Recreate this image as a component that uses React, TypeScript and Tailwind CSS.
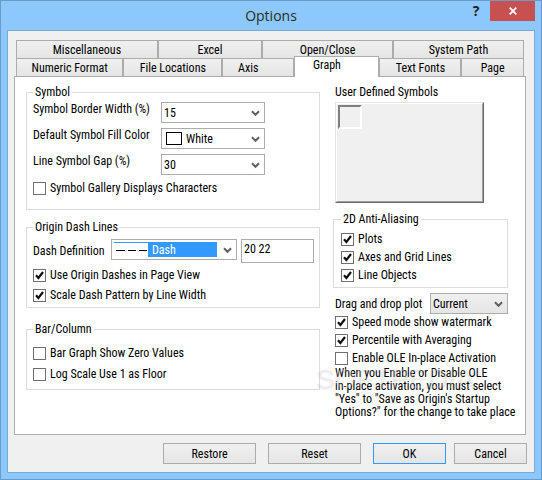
import React from "react";

const topTabs = [
  { label: "Miscellaneous", grow: "flex-[142_1_0%]" },
  { label: "Excel", grow: "flex-[104_1_0%]" },
  { label: "Open/Close", grow: "flex-[131_1_0%]" },
  { label: "System Path", grow: "flex-[131_1_0%]" },
];

const bottomTabs = [
  { label: "Numeric Format", grow: "flex-[108_1_0%]" },
  { label: "File Locations", grow: "flex-[99_1_0%]" },
  { label: "Axis", grow: "flex-[72_1_0%]", inner: "block pr-5" },
  {
    label: "Graph",
    grow: "flex-[85_1_0%]",
    inner: "block pr-5 pb-1",
    active: true,
  },
  { label: "Text Fonts", grow: "flex-[82_1_0%]" },
  { label: "Page", grow: "flex-[62_1_0%]" },
];

interface TabProps {
  label: string;
  grow: string;
  inner?: string;
  active?: boolean;
}

const Tab: React.FC<TabProps> = ({ label, grow, inner, active }) => (
  <button
    type="button"
    role="tab"
    aria-selected={!!active}
    className={`${grow} min-w-0 whitespace-nowrap border border-b-0 border-[#acacac] ${
      active
        ? "relative z-10 -mt-[2px] -mb-px bg-white"
        : "bg-linear-to-b from-[#f0f0f0] to-[#e5e5e5]"
    }`}
  >
    <span className={inner}>{label}</span>
  </button>
);

const Chevron: React.FC = () => (
  <svg
    className="pointer-events-none absolute top-1/2 right-1 -mt-[3px] h-[7px] w-[9px]"
    viewBox="0 0 9 7"
    fill="none"
    stroke="#606060"
    strokeWidth={2}
    aria-hidden="true"
  >
    <path d="M1 1.2 4.5 4.8 8 1.2" />
  </svg>
);

interface CheckboxProps {
  label: string;
  checked?: boolean;
}

const Checkbox: React.FC<CheckboxProps> = ({ label, checked }) => (
  <label className="flex h-4 items-center gap-1 whitespace-nowrap">
    <span className="relative flex h-[13px] w-[13px] shrink-0">
      <input
        type="checkbox"
        defaultChecked={checked}
        className="peer h-[13px] w-[13px] appearance-none border border-[#707070] bg-white"
      />
      <svg
        className="pointer-events-none absolute inset-0 hidden h-[13px] w-[13px] peer-checked:block"
        viewBox="0 0 13 13"
        fill="none"
        stroke="#111"
        strokeWidth={2.2}
        aria-hidden="true"
      >
        <path d="M3 6.2 5.4 9 10 3" />
      </svg>
    </span>
    {label}
  </label>
);

interface GroupProps {
  title: string;
  className: string;
  children: React.ReactNode;
}

const Group: React.FC<GroupProps> = ({ title, className, children }) => (
  <fieldset className={`min-w-0 border border-[#dcdcdc] ${className}`}>
    <legend className="h-[14px] px-[2px]">{title}</legend>
    {children}
  </fieldset>
);

interface ComboRowProps {
  id: string;
  label: string;
  options: string[];
  swatch?: boolean;
}

const ComboRow: React.FC<ComboRowProps> = ({ id, label, options, swatch }) => (
  <div className="flex items-start">
    <label htmlFor={id} className="w-32 shrink-0 whitespace-nowrap">
      {label}
    </label>
    <div className="relative h-[21px] w-[104px] border border-[#acacac] bg-white">
      {swatch && (
        <span className="pointer-events-none absolute top-[3px] left-1 h-[13px] w-4 border border-black bg-white" />
      )}
      <select
        id={id}
        className={`h-full w-full appearance-none bg-transparent ${
          swatch ? "pl-6" : "pl-[2px]"
        }`}
      >
        {options.map((option) => (
          <option key={option}>{option}</option>
        ))}
      </select>
      <Chevron />
    </div>
  </div>
);

interface DialogButtonProps {
  label: string;
  className: string;
}

const DialogButton: React.FC<DialogButtonProps> = ({ label, className }) => (
  <button
    type="button"
    className={`h-[21px] border bg-linear-to-b from-[#f0f0f0] to-[#e5e5e5] ${className}`}
  >
    {label}
  </button>
);

const SymbolGroup: React.FC = () => (
  <Group title="Symbol" className="pr-2 pb-[13px] pl-[6px]">
    <div className="flex flex-col gap-[5px] pt-[3px]">
      <ComboRow
        id="border-width"
        label="Symbol Border Width (%)"
        options={["15", "20", "30"]}
      />
      <ComboRow
        id="fill-color"
        label="Default Symbol Fill Color"
        options={["White", "Black"]}
        swatch
      />
      <ComboRow
        id="symbol-gap"
        label="Line Symbol Gap (%)"
        options={["30", "20", "15"]}
      />
      <Checkbox label="Symbol Gallery Displays Characters" />
    </div>
  </Group>
);

const DashGroup: React.FC = () => (
  <Group title="Origin Dash Lines" className="mt-[10px] pr-[5px] pb-1 pl-[6px]">
    <div className="flex flex-col gap-1 pt-[5px]">
      <div className="flex items-start">
        <label
          htmlFor="dash-definition"
          className="w-[78px] shrink-0 pt-[5px] whitespace-nowrap"
        >
          Dash Definition
        </label>
        <div className="relative h-[21px] w-[126px] shrink-0 border border-[#acacac] bg-white">
          {/* Highlighted entry with a preview of the dash pattern */}
          <span className="pointer-events-none absolute top-[2px] right-[19px] bottom-[2px] left-[2px] bg-[#3399ff] pt-px">
            <svg
              className="h-full w-[34px] bg-white"
              viewBox="0 0 34 14"
              stroke="#000"
              aria-hidden="true"
            >
              <path d="M2 7.5H11M14 7.5H22M25 7.5H33" />
            </svg>
          </span>
          <select
            id="dash-definition"
            className="relative h-full w-full appearance-none bg-transparent pl-10 text-white"
          >
            <option>Dash</option>
            <option>Dot</option>
          </select>
          <Chevron />
        </div>
        <input
          type="text"
          aria-label="Dash pattern"
          defaultValue="20 22"
          className="ml-1 h-6 min-w-0 flex-1 border border-[#acacac] bg-white px-[2px] pb-1"
        />
      </div>
      <Checkbox label="Use Origin Dashes in Page View" checked />
      <Checkbox label="Scale Dash Pattern by Line Width" checked />
    </div>
  </Group>
);

const BarGroup: React.FC = () => (
  <Group title="Bar/Column" className="mt-[14px] pr-2 pb-[7px] pl-[6px]">
    <div className="flex flex-col gap-[5px] pt-[9px]">
      <Checkbox label="Bar Graph Show Zero Values" />
      <Checkbox label="Log Scale Use 1 as Floor" />
    </div>
  </Group>
);

const RightColumn: React.FC = () => (
  <div className="flex min-w-0 flex-col">
    <p className="ml-[2px]">User Defined Symbols</p>
    <div className="mt-[3px] ml-[2px] h-[101px] w-[149px] border border-t-[#e3e3e3] border-r-[#696969] border-b-[#696969] border-l-[#e3e3e3] bg-[#f0f0f0]">
      <div className="h-full border border-t-white border-r-[#a0a0a0] border-b-[#a0a0a0] border-l-white pt-px pl-px">
        <button
          type="button"
          aria-label="Symbol slot"
          className="block h-6 w-6 border-2 border-t-[#808080] border-r-white border-b-white border-l-[#808080]"
        />
      </div>
    </div>

    <Group title="2D Anti-Aliasing" className="mt-[9px] mr-3 pb-1 pl-[7px]">
      <div className="flex flex-col gap-[2px] pt-[5px]">
        <Checkbox label="Plots" checked />
        <Checkbox label="Axes and Grid Lines" checked />
        <Checkbox label="Line Objects" checked />
      </div>
    </Group>

    <div className="mt-[5px] mr-3 ml-[2px] flex items-center justify-between">
      <label htmlFor="drag-plot" className="whitespace-nowrap">
        Drag and drop plot
      </label>
      <div className="relative h-[21px] w-[78px] border border-[#acacac] bg-linear-to-b from-[#f0f0f0] to-[#e5e5e5]">
        <select
          id="drag-plot"
          className="h-full w-full appearance-none bg-transparent pl-[2px]"
        >
          <option>Current</option>
          <option>Default</option>
        </select>
        <Chevron />
      </div>
    </div>

    <div className="ml-[2px] flex flex-col gap-[2px]">
      <Checkbox label="Speed mode show watermark" checked />
      <Checkbox label="Percentile with Averaging" checked />
      <Checkbox label="Enable OLE In-place Activation" />
    </div>
    <div className="relative mt-px ml-[2px]">
      <p className="leading-[13px] whitespace-nowrap">
        When you Enable or Disable OLE
        <br />
        in-place activation, you must select
        <br />
        "Yes" to "Save as Origin's Startup
        <br />
        Options?" for the change to take place
      </p>
      <span className="pointer-events-none absolute -top-1 -left-5 flex items-start font-['Liberation_Sans',sans-serif] text-[28px] leading-8 text-white/25 [text-shadow:1px_1px_2px_rgb(0_0_0/0.12)]">
        SOFTPEDIA
        <span className="text-[10px] leading-4">®</span>
      </span>
    </div>
  </div>
);

export default function App() {
  return (
    <main className="flex min-h-screen flex-col border border-[#6d9bc8] bg-[#8cc8fb] px-[6px] pb-[6px] font-['Roboto_Condensed','Roboto',sans-serif] text-[12px] leading-[14px] text-black">
      <header className="relative flex h-[29px] items-center justify-center">
        <h1 className="font-['Open_Sans',sans-serif] text-[14px] text-[#2b2b2b]">
          Options
        </h1>
        <div className="absolute top-0 right-0 flex items-start font-['Open_Sans',sans-serif] font-bold">
          <button
            type="button"
            aria-label="Help"
            className="h-5 w-7 text-[14px] text-[#1e1e1e]"
          >
            ?
          </button>
          <button
            type="button"
            aria-label="Close"
            className="flex h-5 w-[45px] items-center justify-center bg-[#c75050]"
          >
            <svg
              className="h-2 w-2"
              viewBox="0 0 8 8"
              stroke="#fff"
              strokeWidth={1.8}
              aria-hidden="true"
            >
              <path d="M.7.7 7.3 7.3M7.3.7.7 7.3" />
            </svg>
          </button>
        </div>
      </header>

      <div className="flex flex-1 flex-col border border-[#78acd8] bg-[#f0f0f0] px-[6px] pt-[9px] pb-2">
        <div role="tablist" aria-label="Options pages" className="mr-1 ml-[2px]">
          <div className="flex h-[18px]">
            {topTabs.map((tab) => (
              <Tab key={tab.label} {...tab} />
            ))}
          </div>
          <div className="flex h-[18px]">
            {bottomTabs.map((tab) => (
              <Tab key={tab.label} {...tab} />
            ))}
          </div>
        </div>

        <section
          role="tabpanel"
          aria-label="Graph"
          className="mr-[2px] grid flex-1 grid-cols-[294fr_187fr] gap-x-[13px] border border-[#acacac] bg-white pt-2 pr-[5px] pl-[11px]"
        >
          <div className="flex min-w-0 flex-col">
            <SymbolGroup />
            <DashGroup />
            <BarGroup />
          </div>
          <RightColumn />
        </section>

        <footer className="mt-2 mr-px flex justify-end">
          <DialogButton label="Restore" className="w-[93px] border-[#acacac]" />
          <DialogButton label="Reset" className="ml-3 w-[93px] border-[#acacac]" />
          <DialogButton label="OK" className="ml-3 w-[73px] border-[#3399ff]" />
          <DialogButton label="Cancel" className="ml-2 w-[73px] border-[#acacac]" />
        </footer>
      </div>
    </main>
  );
}
